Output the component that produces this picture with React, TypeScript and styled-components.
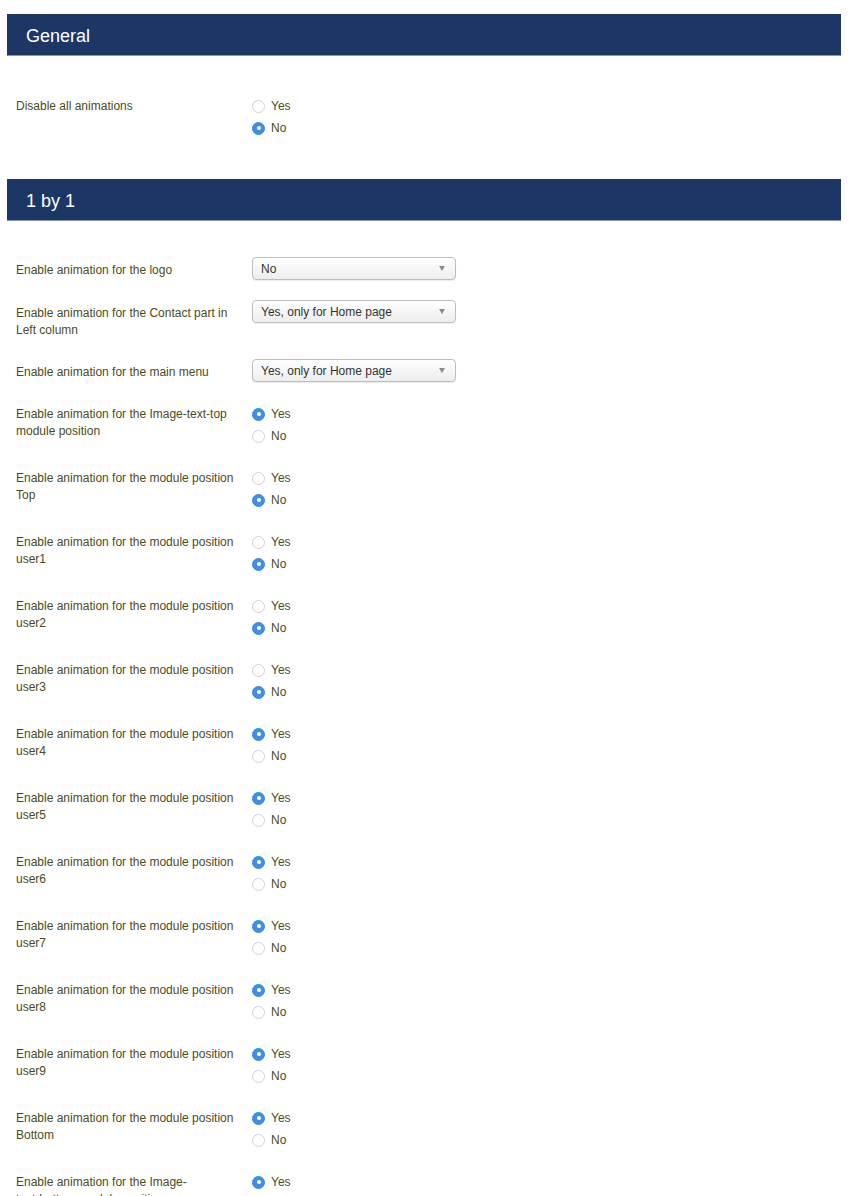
import React from 'react';
import styled, { createGlobalStyle } from 'styled-components';

const GlobalStyle = createGlobalStyle`
  html, body {
    margin: 0;
    padding: 0;
    background: #ffffff;
  }
  body {
    font-family: "Liberation Sans", Arial, sans-serif;
    -webkit-font-smoothing: antialiased;
  }
`;

const Page = styled.div`
  padding: 14px 9px 0 7px;
  height: 1196px;
  overflow: hidden;
  box-sizing: border-box;
`;

const SectionHeader = styled.div`
  height: 42px;
  background: #1c3766;
  border-bottom: 1px solid #8296b8;
  box-sizing: border-box;
  display: flex;
  align-items: center;
  padding: 3px 0 0 19px;
  color: #ffffff;
  font-size: 18px;
`;

const Section = styled.div<{ $top: number; $bottom: number }>`
  padding-top: ${(p) => p.$top}px;
  padding-bottom: ${(p) => p.$bottom}px;
`;

const Row = styled.div<{ $gap: number }>`
  display: flex;
  align-items: flex-start;
  margin-bottom: ${(p) => p.$gap}px;
`;

const Label = styled.div<{ $pad: number }>`
  width: 224px;
  margin-right: 12px;
  padding-left: 9px;
  padding-top: ${(p) => p.$pad}px;
  font-size: 12px;
  line-height: 17px;
  color: #4a4c1d;
`;

const NoBreak = styled.span`
  white-space: nowrap;
`;

const RadioGroup = styled.div`
  display: flex;
  flex-direction: column;
  padding-top: 1px;
`;

const RadioItem = styled.label`
  display: flex;
  align-items: center;
  height: 22px;
  font-size: 12px;
  color: #4a4c1d;
`;

const RadioDot = styled.span<{ $on: boolean }>`
  width: 13px;
  height: 13px;
  border-radius: 50%;
  box-sizing: border-box;
  margin-right: 6px;
  position: relative;
  background: ${(p) => (p.$on ? '#3f8fe9' : '#ffffff')};
  border: 1px solid ${(p) => (p.$on ? '#3a86dc' : '#d2d2d2')};
  &::after {
    content: '';
    display: ${(p) => (p.$on ? 'block' : 'none')};
    position: absolute;
    left: 50%;
    top: 50%;
    width: 4px;
    height: 4px;
    margin: -2px 0 0 -2px;
    border-radius: 50%;
    background: #ffffff;
  }
`;

const Select = styled.div`
  width: 204px;
  height: 23px;
  box-sizing: border-box;
  border: 1px solid #bdbdbd;
  border-radius: 4px;
  background: linear-gradient(#ffffff, #ededed);
  box-shadow: 0 1px 1px rgba(0, 0, 0, 0.08);
  display: flex;
  align-items: center;
  justify-content: space-between;
  padding: 0 10px 0 8px;
  font-size: 12px;
  color: #333333;
`;

const Caret = styled.span`
  width: 0;
  height: 0;
  border-left: 3px solid transparent;
  border-right: 3px solid transparent;
  border-top: 5px solid #8a8a8a;
`;

type Field =
  | { id: string; label: React.ReactNode; kind: 'select'; value: string }
  | { id: string; label: React.ReactNode; kind: 'radio'; yes: boolean };

const generalFields: Field[] = [
  { id: 'disable', label: 'Disable all animations', kind: 'radio', yes: false },
];

const pos = (p: string, yes: boolean): Field => ({
  id: p,
  label: `Enable animation for the module position ${p}`,
  kind: 'radio',
  yes,
});

const oneByOne: Field[] = [
  { id: 'logo', label: 'Enable animation for the logo', kind: 'select', value: 'No' },
  {
    id: 'contact',
    label: 'Enable animation for the Contact part in Left column',
    kind: 'select',
    value: 'Yes, only for Home page',
  },
  { id: 'menu', label: 'Enable animation for the main menu', kind: 'select', value: 'Yes, only for Home page' },
  { id: 'itt', label: 'Enable animation for the Image-text-top module position', kind: 'radio', yes: true },
  pos('Top', false),
  pos('user1', false),
  pos('user2', false),
  pos('user3', false),
  pos('user4', true),
  pos('user5', true),
  pos('user6', true),
  pos('user7', true),
  pos('user8', true),
  pos('user9', true),
  pos('Bottom', true),
  {
    id: 'itb',
    label: (
      <>
        Enable animation for the Image-<NoBreak>text-bottom</NoBreak> module position
      </>
    ),
    kind: 'radio',
    yes: true,
  },
];

function FieldRow({ field }: { field: Field }) {
  if (field.kind === 'select') {
    return (
      <Row $gap={20}>
        <Label $pad={5}>{field.label}</Label>
        <Select>
          <span>{field.value}</span>
          <Caret />
        </Select>
      </Row>
    );
  }
  return (
    <Row $gap={19}>
      <Label $pad={4}>{field.label}</Label>
      <RadioGroup>
        <RadioItem>
          <RadioDot $on={field.yes} />
          Yes
        </RadioItem>
        <RadioItem>
          <RadioDot $on={!field.yes} />
          No
        </RadioItem>
      </RadioGroup>
    </Row>
  );
}

export default function App() {
  return (
    <Page>
      <GlobalStyle />
      <SectionHeader>General</SectionHeader>
      <Section $top={38} $bottom={21}>
        {generalFields.map((f) => (
          <FieldRow key={f.id} field={f} />
        ))}
      </Section>
      <SectionHeader>1 by 1</SectionHeader>
      <Section $top={36} $bottom={0}>
        {oneByOne.map((f) => (
          <FieldRow key={f.id} field={f} />
        ))}
      </Section>
    </Page>
  );
}
